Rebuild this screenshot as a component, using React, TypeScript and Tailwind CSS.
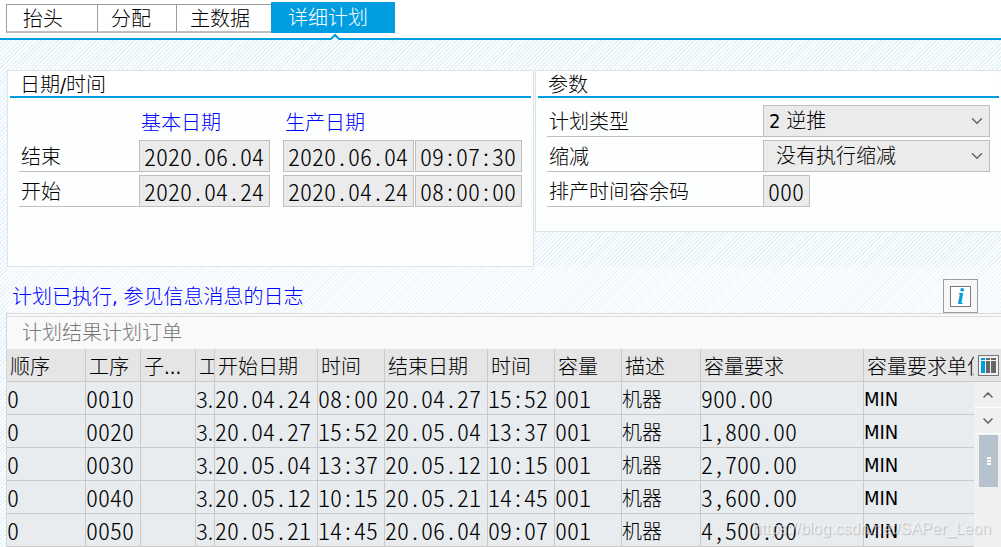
import React from 'react';
import { ChevronDown, ChevronUp } from 'lucide-react';

const TABS = [
  { label: '抬头', size: 'w-[91px] pl-4' },
  { label: '分配', size: 'w-[79px] pl-[13px]' },
  { label: '主数据', size: 'w-[95px] pl-[13px]' },
];

const SCHEDULE = [
  { id: 'end', label: '结束', basic: '2020.06.04', date: '2020.06.04', time: '09:07:30' },
  { id: 'start', label: '开始', basic: '2020.04.24', date: '2020.04.24', time: '08:00:00' },
];

const COLUMNS = [
  { label: '顺序', size: 'w-[79px]' },
  { label: '工序', size: 'w-[55px]' },
  { label: '子...', size: 'w-[55px]' },
  { label: '工', size: 'w-[19px] overflow-hidden' },
  { label: '开始日期', size: 'w-[103px]' },
  { label: '时间', size: 'w-[67px]' },
  { label: '结束日期', size: 'w-[103px]' },
  { label: '时间', size: 'w-[67px]' },
  { label: '容量', size: 'w-[67px]' },
  { label: '描述', size: 'w-[79px]' },
  { label: '容量要求', size: 'w-[163px]' },
  { label: '容量要求单位', size: 'overflow-hidden' },
];

const ORDERS = [
  ['0', '0010', '', '3.', '20.04.24', '08:00', '20.04.27', '15:52', '001', '机器', '900.00', 'MIN'],
  ['0', '0020', '', '3.', '20.04.27', '15:52', '20.05.04', '13:37', '001', '机器', '1,800.00', 'MIN'],
  ['0', '0030', '', '3.', '20.05.04', '13:37', '20.05.12', '10:15', '001', '机器', '2,700.00', 'MIN'],
  ['0', '0040', '', '3.', '20.05.12', '10:15', '20.05.21', '14:45', '001', '机器', '3,600.00', 'MIN'],
  ['0', '0050', '', '3.', '20.05.21', '14:45', '20.06.04', '09:07', '001', '机器', '4,500.00', 'MIN'],
];

// half-width digits, so that dates line up in columns
const NUM = "font-['Noto_Sans_CJK_SC',monospace] font-light text-[24px] [font-feature-settings:'hwid']";
const FIELD = `h-8 border border-[#bfbfbf] bg-[#ebebeb] px-1 text-black outline-none ${NUM}`;
const LABEL = 'block h-8 border-b border-[#bfbfbf] pl-0.5 leading-[34px]';

const cellStyle = (i: number) => {
  if (i === 3) return "font-['Noto_Sans_CJK_SC',sans-serif] text-[22px] leading-8";
  if (i === 9) return 'pt-1 leading-7';
  if (i === 11) return 'pt-0.5 leading-[30px]';
  return `leading-8 ${NUM}`;
};

const Select = ({ id, value, indent }: { id: string; value: string; indent: string }) => (
  <div className="relative mr-[11px] flex-1">
    <select id={id} className={`block h-8 w-full appearance-none border border-[#bfbfbf] bg-[#ebebeb] text-[20px] font-light outline-none ${indent}`}>
      <option>{value}</option>
    </select>
    <ChevronDown size={18} strokeWidth={2} className="pointer-events-none absolute right-1 top-[7px] text-[#666]" />
  </div>
);

const Header = () => (
  <nav className="relative flex h-10 items-start border-b-2 border-[#009de0] bg-white pl-1.5 pt-0.5">
    {TABS.map((tab) => (
      <button
        key={tab.label}
        className={`mt-0.5 h-[29px] border-b-2 border-t border-b-[#bfbfbf] border-t-[#9d9d9d] border-l border-l-[#9d9d9d] text-left leading-7 ${tab.size}`}
      >
        {tab.label}
      </button>
    ))}
    <button className="h-[31px] w-[124px] bg-[#009de0] pl-[17px] text-left leading-8 text-white">详细计划</button>
    <svg className="absolute left-[330px] top-[33px]" width="10" height="7" viewBox="0 0 10 7">
      <path d="M0 7V6L5 1l5 5v1z" fill="#fff" />
      <path d="M0 6l1 0L5 2l4 4h1" fill="none" stroke="#009de0" strokeWidth="2" />
    </svg>
  </nav>
);

const DatePanel = () => (
  <section className="h-[197px] w-[527px] shrink-0 border border-[#e1e4e6] bg-[#fdfefe]">
    <h2 className="mx-0.5 h-[27px] border-b-2 border-[#009de0] bg-white pl-2.5 leading-7">日期/时间</h2>
    <table className="ml-[11px] mt-2 border-separate border-spacing-0">
      <thead>
        <tr className="h-[34px] text-left text-[#0000ff]">
          <td className="w-[120px]" />
          <th className="w-[144px] pl-0.5 font-light">基本日期</th>
          <th className="pl-0.5 font-light" colSpan={2}>生产日期</th>
        </tr>
      </thead>
      <tbody>
        {SCHEDULE.map((row) => (
          <tr key={row.id}>
            <th className="p-0 pb-[3px] text-left font-light">
              <div className={LABEL}>{row.label}</div>
            </th>
            <td className="p-0 pb-[3px]">
              <input aria-label={`${row.label} 基本日期`} readOnly value={row.basic} className={`block w-[131px] ${FIELD}`} />
            </td>
            <td className="p-0 pb-[3px] pr-px">
              <input aria-label={`${row.label} 生产日期`} readOnly value={row.date} className={`block w-[131px] ${FIELD}`} />
            </td>
            <td className="p-0 pb-[3px]">
              <input aria-label={`${row.label} 时间`} readOnly value={row.time} className={`block w-[107px] ${FIELD}`} />
            </td>
          </tr>
        ))}
      </tbody>
    </table>
  </section>
);

const ParamPanel = () => (
  <section className="h-[162px] min-w-0 flex-1 border border-r-0 border-[#e1e4e6] bg-[#fdfefe]">
    <h2 className="mx-0.5 h-[27px] border-b-2 border-[#009de0] bg-white pl-2.5 leading-7">参数</h2>
    <div className="ml-[11px] mt-[7px] flex flex-col gap-[3px]">
      <div className="flex">
        <label htmlFor="type" className={`w-[216px] ${LABEL}`}>计划类型</label>
        <Select id="type" value="2 逆推" indent="pl-[5px]" />
      </div>
      <div className="flex">
        <label htmlFor="reduce" className={`w-[216px] ${LABEL}`}>缩减</label>
        <Select id="reduce" value="没有执行缩减" indent="pl-3" />
      </div>
      <div className="flex">
        <label htmlFor="float" className={`w-[216px] ${LABEL}`}>排产时间容余码</label>
        <input id="float" readOnly value="000" className={`w-[47px] ${FIELD}`} />
      </div>
    </div>
  </section>
);

const OrderTable = () => (
  <section className="ml-1.5 border-l border-t border-[#d6d9db] bg-[#f9f9f9]">
    <h2 className="mt-0.5 h-[33px] border-t border-[#dcdcdc] pl-[15px] leading-8 text-[#777]">计划结果计划订单</h2>
    <div className="flex">
      <div className="min-w-0 flex-1 overflow-hidden">
        <table className="w-full table-fixed border-separate border-spacing-0">
          <thead>
            <tr className="h-[33px] bg-[#e5e5e5] text-left">
              {COLUMNS.map((col, i) => (
                <th
                  key={i}
                  className={`whitespace-nowrap border-b border-r border-[#c9c9c9] pb-0 pl-[3px] pr-0 pt-1 font-light leading-7 last:border-r-0 ${col.size}`}
                >
                  {col.label}
                </th>
              ))}
            </tr>
          </thead>
          <tbody>
            {ORDERS.map((row) => (
              <tr key={row[1]} className="h-[33px] bg-[#e8ecef]">
                {row.map((cell, i) => (
                  <td key={i} className={`whitespace-nowrap border-b border-r border-[#c9c9c9] p-0 last:border-r-0 ${cellStyle(i)}`}>
                    {cell}
                  </td>
                ))}
              </tr>
            ))}
          </tbody>
        </table>
      </div>
      <div className="flex w-[27px] flex-col bg-[#f0f0f0]">
        <div className="flex h-[33px] items-center border-b border-[#c9c9c9] bg-[#e5e5e5] pl-1">
          <button aria-label="列配置">
            <svg width="21" height="21" viewBox="0 0 21 21">
              <rect x=".5" y=".5" width="20" height="20" fill="#f2f2f2" stroke="#75797d" />
              <path d="M3 3h4v2H3zM3 6h4v12H3z" fill="#009de0" />
              <path d="M8 3h4v2H8zM8 6h4v12H8zM13 3h5v2h-5zM13 6h5v12h-5z" fill="#666" />
            </svg>
          </button>
        </div>
        <button aria-label="向上" className="flex h-[26px] items-center justify-center border-b border-white text-[#666]">
          <ChevronUp size={16} strokeWidth={2.5} />
        </button>
        <button aria-label="向下" className="flex h-[26px] items-center justify-center border-b border-white text-[#666]">
          <ChevronDown size={16} strokeWidth={2.5} />
        </button>
        <div className="ml-[5px] mt-px flex h-[52px] w-[19px] flex-col items-center justify-center gap-px bg-[#b6c2cd]">
          <span className="h-0.5 w-1 bg-white" />
          <span className="h-0.5 w-1 bg-white" />
          <span className="h-0.5 w-1 bg-white" />
        </div>
      </div>
    </div>
  </section>
);

export default function App() {
  return (
    <div className="relative w-full overflow-hidden bg-white bg-[repeating-linear-gradient(135deg,#e4f1f8_0px,#e4f1f8_1px,#ffffff_2px,#ffffff_3px)] font-['DejaVu_Sans_Condensed','Noto_Sans_CJK_SC',sans-serif] text-[20px] font-light text-black">
      <Header />
      <main className="pt-[30px]">
        <div className="flex items-start gap-px pl-[7px]">
          <DatePanel />
          <ParamPanel />
        </div>
        <div className="ml-[7px] flex h-[46px] items-end justify-between bg-white/40 pl-[5px] pr-[23px]">
          <p className="leading-8 text-[#0000ff]">计划已执行, 参见信息消息的日志</p>
          <button aria-label="信息" className="flex h-[34px] w-[35px] items-center justify-center border border-[#9d9d9d] bg-[#f7f7f7]">
            <span className="flex h-[21px] w-[21px] items-center justify-center border border-[#75797d] bg-white font-['Liberation_Serif',serif] text-[24px] font-bold italic leading-5 text-[#009de0]">i</span>
          </button>
        </div>
        <OrderTable />
      </main>
      <div className="pointer-events-none absolute bottom-1.5 right-2.5 font-['Liberation_Sans',sans-serif] text-[16px] font-normal leading-6 text-white/60 [text-shadow:1px_1px_1px_rgba(0,0,0,0.2)]">
        https://blog.csdn.net/SAPer_Leon
      </div>
    </div>
  );
}
